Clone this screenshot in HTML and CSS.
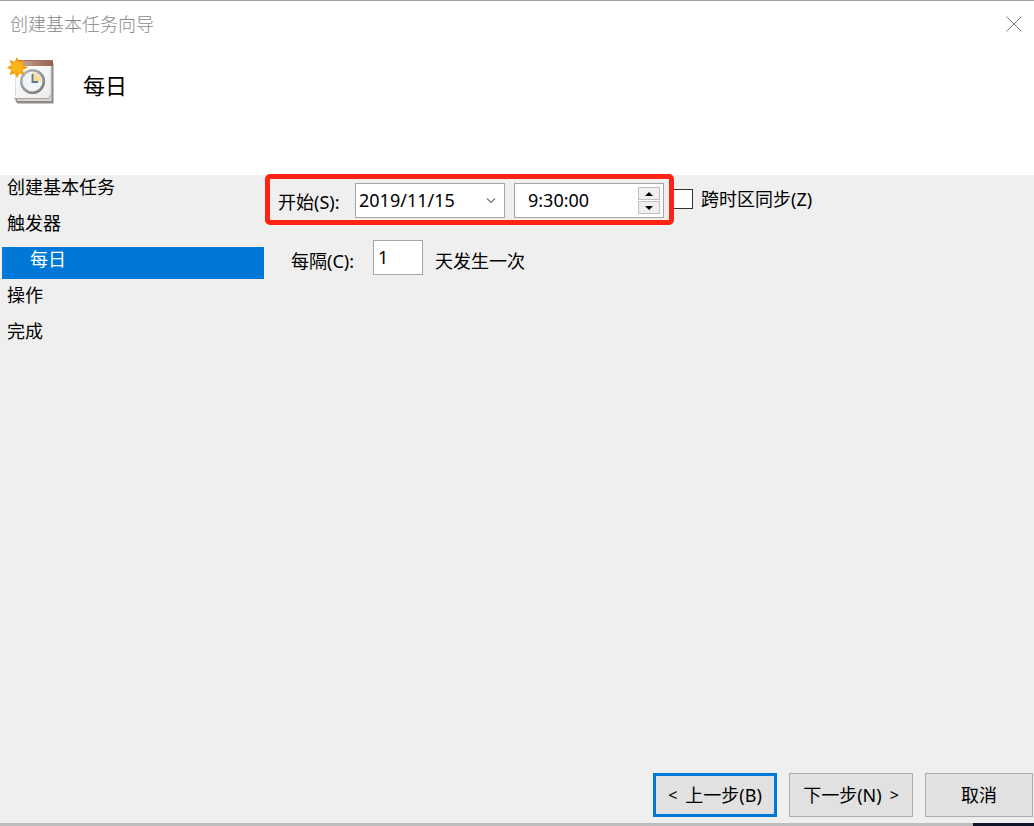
FILE: index.html
```html
<!DOCTYPE html>
<html lang="zh-CN">
<head>
<meta charset="utf-8">
<meta name="viewport" content="width=device-width, initial-scale=1">
<title>创建基本任务向导</title>
<link rel="stylesheet" href="styles.css">
</head>
<body>
<main class="dialog">
  <header class="titlebar">
    <span class="titlebar-text">创建基本任务向导</span>
    <button class="close" type="button" aria-label="关闭">
      <svg width="16" height="16" viewBox="0 0 16 16" fill="none" stroke="#777" stroke-width="1"><path d="M.5 .5 15.5 15.5M15.5 .5 .5 15.5"/></svg>
    </button>
  </header>

  <section class="banner">
    <svg class="banner-icon" width="50" height="50" viewBox="0 0 50 50" aria-hidden="true">
      <defs>
        <linearGradient id="top" x1="0" x2="1" y1="0" y2="0"><stop offset="0" stop-color="#c9aa9d"/><stop offset="1" stop-color="#95604c"/></linearGradient>
        <linearGradient id="page" x1="0" x2="1" y1="0" y2="1"><stop offset="0" stop-color="#fff"/><stop offset="1" stop-color="#ececec"/></linearGradient>
        <linearGradient id="rim" x1="0" x2="1" y1="0" y2="1"><stop offset="0" stop-color="#b9bcbf"/><stop offset="1" stop-color="#74787b"/></linearGradient>
        <radialGradient id="sun"><stop offset="0" stop-color="#ffc526"/><stop offset="1" stop-color="#f58b06"/></radialGradient>
      </defs>
      <path d="M9 6H46.500V46.500H10.500L8.500 44z" fill="#8f8b89"/>
      <path d="M10 8H44.500V44H10z" fill="#d5d3d2"/>
      <path d="M9 9H43.500V39Q43 41 41 41H7Q9 39 9 35z" fill="url(#page)"/>
      <path d="M7 41.500H41Q43 41 43.500 38" fill="none" stroke="#aaa7a5"/>
      <path d="M10 3H46V9H10z" fill="url(#top)"/>
      <path d="M10 3.500H46" stroke="#a9715d"/>
      <circle cx="25.500" cy="24.500" r="11.300" fill="#f1f4f7" stroke="url(#rim)" stroke-width="2.600"/>
      <path d="M25.500 24.500V15.500A9 9 0 0 1 34.500 24.500z" fill="#f6dc98"/>
      <circle cx="25.500" cy="24.500" r="9.300" fill="none" stroke="#c9d0d6" stroke-width="1" stroke-dasharray="1 3.870"/>
      <path d="M25.500 17V25H31" fill="none" stroke="#58789c" stroke-width="1.800"/>
      <path d="M10 0 12.200 4.700 17 3 15.800 8 21 10.500 15.800 13 17.500 18 12.500 16.500 10 21 7.600 16.500 2.500 18 4.500 13 0 10.500 4.500 8 2.500 3 7.700 4.700z" fill="url(#sun)"/>
      <circle cx="10" cy="10.500" r="5.500" fill="#ffb31c"/>
    </svg>
    <h1 class="banner-title">每日</h1>
  </section>

  <form class="body">
    <nav aria-label="步骤">
      <ol class="steps">
        <li class="step">创建基本任务</li>
        <li class="step">触发器</li>
        <li class="step step-current" aria-current="step">每日</li>
        <li class="step">操作</li>
        <li class="step">完成</li>
      </ol>
    </nav>

    <section class="panel">
      <div class="row">
        <div class="start">
          <label class="start-label" for="date">开始(S):</label>
          <div class="field">
            <input class="field-input" id="date" type="text" value="2019/11/15">
            <button class="drop" type="button" aria-label="选择日期">
              <svg width="10" height="6" viewBox="0 0 10 6" fill="none" stroke="#777" stroke-width="1.200"><path d="M1 .5 5 4.500 9 .5"/></svg>
            </button>
          </div>
          <div class="field">
            <input class="field-input field-time" type="text" value="9:30:00" aria-label="开始时间">
            <div class="spin">
              <button class="spin-button" type="button" aria-label="增加"><svg width="8" height="4" viewBox="0 0 8 4"><path d="M0 4 4 0 8 4z"/></svg></button>
              <button class="spin-button" type="button" aria-label="减少"><svg width="8" height="4" viewBox="0 0 8 4"><path d="M0 0 4 4 8 0z"/></svg></button>
            </div>
          </div>
        </div>
        <label class="sync"><input class="sync-box" type="checkbox">跨时区同步(Z)</label>
      </div>
      <div class="row interval">
        <label class="interval-label" for="every">每隔(C):</label>
        <input class="interval-input" id="every" type="text" value="1">
        <span class="interval-label">天发生一次</span>
      </div>
    </section>

    <footer class="actions">
      <button class="button button-default" type="button"><span class="arrow">&lt;</span><span>上一步(B)</span></button>
      <button class="button" type="button"><span>下一步(N)</span><span class="arrow">&gt;</span></button>
      <button class="button button-cancel" type="button">取消</button>
    </footer>
  </form>
  <div class="edge"></div>
</main>
</body>
</html>
```
FILE: styles.css
```css
* {
  box-sizing: border-box;
}

body {
  margin: 0;
  background: #fff;
  color: #000;
  font: 18px/26px "Noto Sans", "Noto Sans CJK SC", sans-serif;
}

button,
input {
  margin: 0;
  color: inherit;
  font: inherit;
}

svg {
  display: block;
}

.dialog {
  display: flex;
  flex-direction: column;
  min-height: 100vh;
  border-top: 1px solid #a3a3a3;
}

.titlebar {
  display: flex;
  align-items: center;
  justify-content: space-between;
  height: 46px;
  padding: 0 12px 0 10px;
}

.titlebar-text {
  color: #888;
  font-weight: 300;
}

.close {
  padding: 0;
  border: 0;
  background: none;
}

.banner {
  display: flex;
  gap: 26px;
  height: 128px;
  padding: 10px 7px;
}

.banner-title {
  margin: 12px 0 0;
  font-size: 22px;
  font-weight: 400;
  line-height: 32px;
}

.body {
  display: grid;
  flex: 1;
  grid-template-columns: 265px 1fr;
  grid-template-rows: 1fr auto;
  background: #efefef;
}

.steps {
  display: grid;
  gap: 4px;
  margin: 0;
  padding: 0 1px 0 2px;
  list-style: none;
}

.step {
  height: 32px;
  padding-left: 5px;
  line-height: 24px;
}

.step-current {
  padding-left: 28px;
  background: #0078d7;
  color: #fff;
}

.panel {
  margin-top: -1px;
}

.row {
  display: flex;
  align-items: center;
}

.start {
  display: flex;
  z-index: 1;
  gap: 9px;
  padding: 4px 5px 2px 8px;
  border: 5px solid #ff2313;
  border-radius: 5px;
}

.start-label {
  width: 68px;
  padding-top: 6px;
  white-space: nowrap;
}

.field {
  display: flex;
  width: 150px;
  height: 35px;
  border: 1px solid #a5a5a5;
  background: #fff;
}

.field-input {
  flex: 1;
  min-width: 0;
  padding: 0 0 2px 3px;
  border: 0;
  background: none;
}

.field-time {
  padding-left: 13px;
}

.drop {
  padding: 0 8px;
  border: 0;
  background: none;
}

.spin {
  display: grid;
  gap: 1px;
  width: 28px;
  padding: 3px;
}

.spin-button {
  display: grid;
  place-items: center;
  padding: 0;
  border: 1px solid #c0c0c0;
  background: #efefef;
}

.sync {
  display: flex;
  align-items: center;
  gap: 8px;
  margin-left: -1px;
  padding-bottom: 2px;
  white-space: nowrap;
}

.sync-box {
  width: 20px;
  height: 20px;
  border: 1px solid #333;
  background: #fff;
  appearance: none;
}

.sync-box:checked {
  background: #0078d7;
}

.interval {
  gap: 12px;
  padding: 15px 0 0 26px;
}

.interval-label:first-child {
  width: 70px;
}

.interval-label {
  padding-top: 6px;
}

.interval-input {
  width: 50px;
  height: 35px;
  padding: 0 4px 2px;
  border: 1px solid #a5a5a5;
  background: #fff;
}

.actions {
  display: flex;
  grid-column: 1 / -1;
  gap: 12px;
  justify-content: flex-end;
  padding: 0 1px 6px;
}

.button {
  display: flex;
  align-items: center;
  justify-content: center;
  gap: 8px;
  width: 124px;
  height: 44px;
  padding: 0;
  border: 1px solid #adadad;
  background: #e1e1e1;
  white-space: nowrap;
}

.arrow {
  font-size: 16px;
}

.button-default {
  border: 3px solid #0078d7;
}

.button-cancel {
  width: 108px;
}

.edge {
  height: 3px;
  border-right: 61px solid #11162a;
  background: #bdbdbd;
}
```
